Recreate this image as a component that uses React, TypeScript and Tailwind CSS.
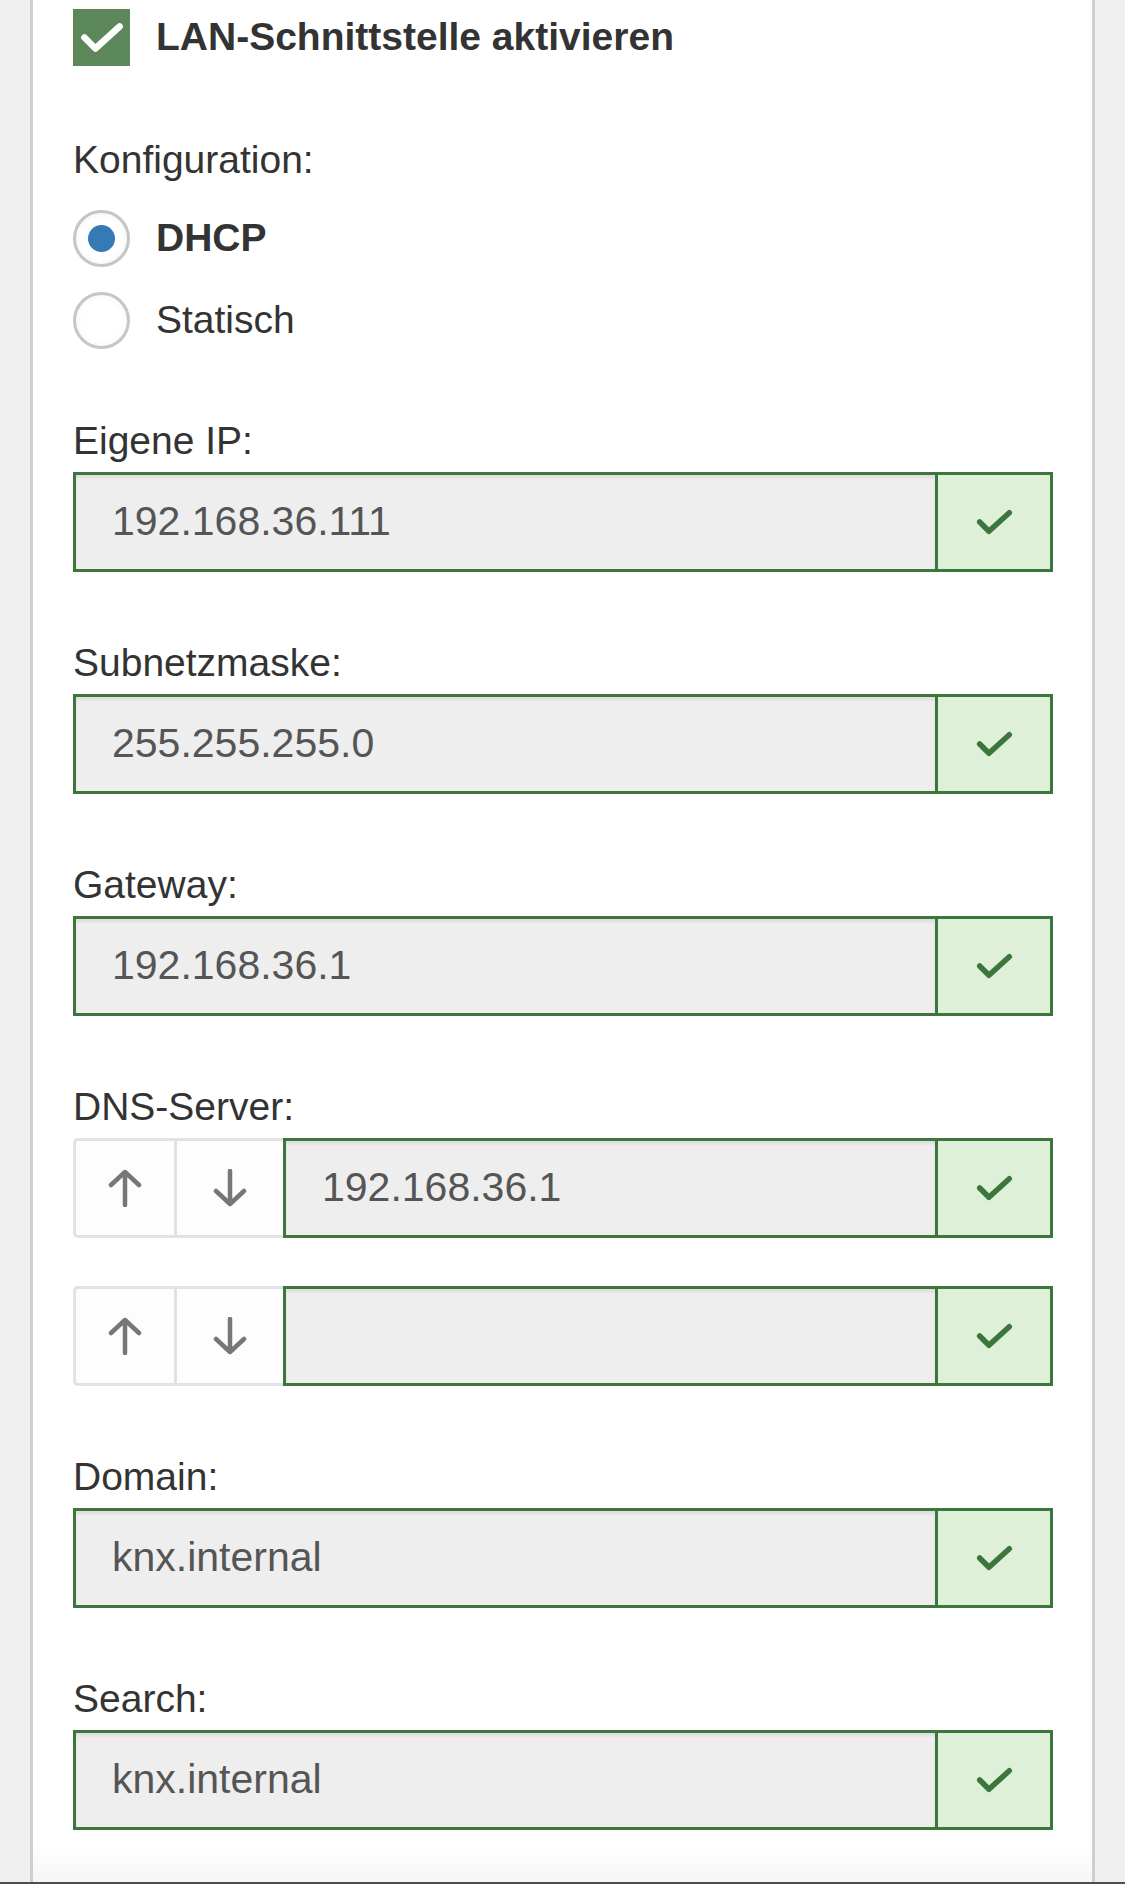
import React from "react";

const font = { fontFamily: '"Liberation Sans", Arial, sans-serif' };

function Check({ className, width = 5.5 }: { className?: string; width?: number }) {
  return (
    <svg viewBox="0 0 40 28" className={className} fill="none" stroke="currentColor" strokeWidth={width} strokeLinecap="round" strokeLinejoin="round">
      <path d="M4 14 L14 24 L36 4" />
    </svg>
  );
}

function ArrowUp() {
  return (
    <svg viewBox="0 0 34 38" className="h-[38px] w-[34px] text-[#777]" fill="none" stroke="currentColor" strokeWidth={4.5} strokeLinecap="round" strokeLinejoin="round">
      <path d="M17 36V3 M3 16 L17 3 L31 16" />
    </svg>
  );
}

function ArrowDown() {
  return (
    <svg viewBox="0 0 34 38" className="h-[38px] w-[34px] text-[#777]" fill="none" stroke="currentColor" strokeWidth={4.5} strokeLinecap="round" strokeLinejoin="round">
      <path d="M17 2V35 M3 22 L17 35 L31 22" />
    </svg>
  );
}

function ValidInput({ value }: { value: string }) {
  return (
    <div className="flex h-[100px] flex-1 border-[3px] border-[#3c763d]">
      <div className="flex flex-1 items-center bg-[#eeeeee] pl-[36px] text-[41px] text-[#555] shadow-[inset_0_3px_3px_rgba(0,0,0,0.07)]">
        {value}
      </div>
      <div className="flex w-[115px] items-center justify-center border-l-[3px] border-[#3c763d] bg-[#dff0d8] text-[#3c763d]">
        <Check className="h-[26px] w-[37px]" width={6} />
      </div>
    </div>
  );
}

function Field({ label, value, first }: { label: string; value: string; first?: boolean }) {
  return (
    <div className={first ? "mt-[69px]" : "mt-[68px]"}>
      <div className="h-[46px] text-[39px] leading-[46px] text-[#333]">{label}</div>
      <div className="mt-[8px] flex">
        <ValidInput value={value} />
      </div>
    </div>
  );
}

function DnsRow({ value }: { value: string }) {
  return (
    <div className="flex h-[100px]">
      <div className="flex h-full w-[210px] overflow-hidden rounded-l-[5px] border-y-[3px] border-l-[3px] border-[#e2e2e2] bg-[#fdfdfd]">
        <button className="flex w-[101px] items-center justify-center border-r-[3px] border-[#e2e2e2]">
          <ArrowUp />
        </button>
        <button className="flex flex-1 items-center justify-center">
          <ArrowDown />
        </button>
      </div>
      <ValidInput value={value} />
    </div>
  );
}

function Radio({ checked, label }: { checked?: boolean; label: string }) {
  return (
    <div className="flex h-[57px] items-center">
      <span className="flex h-[57px] w-[57px] items-center justify-center rounded-full border-[3px] border-[#c6c6c6] bg-[radial-gradient(circle_at_50%_50%,#ffffff_55%,#eeeeee_100%)]">
        {checked && <span className="h-[27px] w-[27px] rounded-full bg-[#337ab7]" />}
      </span>
      <span className={`ml-[26px] text-[39px] text-[#333] ${checked ? "font-bold" : ""}`}>{label}</span>
    </div>
  );
}

export default function App() {
  return (
    <div className="flex min-h-[1884px] w-[1125px] flex-col bg-[#efefef]" style={font}>
      <div className="ml-[30px] flex w-[1065px] flex-1 flex-col border-x-[3px] border-[#cfcfcf] bg-white bg-[linear-gradient(to_bottom,#ffffff_98%,#f6f6f6_100%)] pl-[40px] pr-[39px] pt-[9px]">
        <div className="flex h-[57px] items-center">
          <span className="flex h-[57px] w-[57px] items-center justify-center bg-[#5b875b] text-white">
            <Check className="h-[31px] w-[44px]" width={6} />
          </span>
          <span className="ml-[26px] text-[39px] font-bold text-[#333]">LAN-Schnittstelle aktivieren</span>
        </div>

        <div className="mt-[71px] h-[46px] text-[39px] leading-[46px] text-[#333]">Konfiguration:</div>
        <div className="mt-[27px]">
          <Radio checked label="DHCP" />
        </div>
        <div className="mt-[25px]">
          <Radio label="Statisch" />
        </div>

        <Field first label="Eigene IP:" value="192.168.36.111" />
        <Field label="Subnetzmaske:" value="255.255.255.0" />
        <Field label="Gateway:" value="192.168.36.1" />

        <div className="mt-[68px]">
          <div className="h-[46px] text-[39px] leading-[46px] text-[#333]">DNS-Server:</div>
          <div className="mt-[8px]">
            <DnsRow value="192.168.36.1" />
          </div>
          <div className="mt-[48px]">
            <DnsRow value="" />
          </div>
        </div>

        <Field label="Domain:" value="knx.internal" />
        <Field label="Search:" value="knx.internal" />
      </div>
      <div className="h-[2px] bg-[#4d4d4d]" />
    </div>
  );
}
